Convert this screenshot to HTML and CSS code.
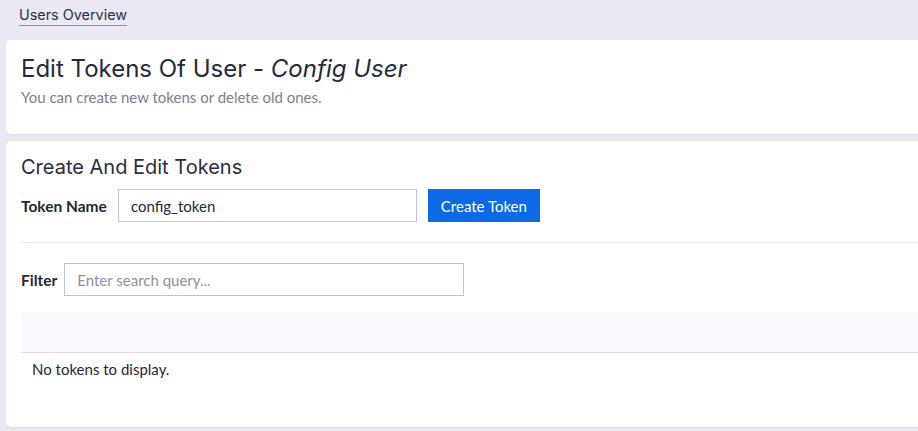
FILE: index.html
```html
<!DOCTYPE html>
<html>
<head>
<meta charset="utf-8">
<link rel="stylesheet" href="styles.css">
</head>
<body>
<div class="page">
  <nav class="crumbs"><a class="crumb" href="#">Users Overview</a></nav>
  <section class="card head-card">
    <h1 class="title">Edit Tokens Of User - <em>Config User</em></h1>
    <p class="subtitle">You can create new tokens or delete old ones.</p>
  </section>
  <section class="card main-card">
    <h2 class="section-title">Create And Edit Tokens</h2>
    <form class="create-row">
      <label class="field-label">Token Name</label>
      <input class="text-input token-input" type="text" value="config_token">
      <button class="btn-primary" type="button">Create Token</button>
    </form>
    <hr class="divider">
    <div class="filter-row">
      <label class="field-label">Filter</label>
      <input class="text-input filter-input" type="text" placeholder="Enter search query...">
    </div>
    <div class="table">
      <div class="table-head"></div>
      <div class="table-empty">No tokens to display.</div>
    </div>
  </section>
</div>
</body>
</html>
```
FILE: styles.css
```css
* { box-sizing: border-box; }
html, body { margin: 0; padding: 0; }
body {
  background: #e9e8f3;
  font-family: "Source Sans Pro", "Lato", "Noto Sans", sans-serif;
  color: #252836;
  overflow: hidden;
  width: 918px;
  height: 431px;
}
.page {
  padding: 0 0 0 6px;
  width: 960px;
}
.crumbs {
  height: 40px;
  padding: 4px 0 0 13px;
}
.crumb {
  display: inline-block;
  font-family: "Inter", "DejaVu Sans", sans-serif;
  font-size: 14.4px;
  color: #2d3047;
  text-decoration: none;
  border-bottom: 1px solid #8a8ca3;
  line-height: 18px;
  padding-bottom: 1px;
}
.card {
  background: #fff;
  border-radius: 5px;
  box-shadow: 0 1px 0 #dedde9, 0 2px 0 #e4e3ee;
}
.head-card {
  height: 94px;
  padding: 14px 15px 0;
  margin-bottom: 7px;
}
.title {
  margin: 0;
  font-family: "Inter", "DejaVu Sans", sans-serif;
  font-weight: 400;
  font-size: 24px;
  line-height: 30px;
  color: #252a3d;
}
.title em { font-style: italic; }
.subtitle {
  margin: 4px 0 0;
  font-size: 15px;
  color: #7f8091;
  line-height: 18px;
}
.main-card {
  height: 286px;
  padding: 13px 0 0 15px;
}
.section-title {
  margin: 0;
  font-family: "Inter", "DejaVu Sans", sans-serif;
  font-weight: 400;
  font-size: 20px;
  line-height: 26px;
  color: #2b2e40;
}
.create-row {
  display: flex;
  align-items: center;
  margin: 9px 0 0;
}
.field-label {
  font-weight: 700;
  font-size: 15.5px;
  color: #252836;
  margin-right: 11px;
}
.text-input {
  height: 33px;
  border: 1px solid #c1c3d8;
  border-radius: 0;
  font-family: inherit;
  font-size: 15px;
  color: #252836;
  padding: 0 12px;
  outline: none;
  background: #fff;
}
.text-input::placeholder { color: #8f90a0; }
.token-input { width: 299px; }
.btn-primary {
  margin-left: 11px;
  height: 33px;
  width: 112px;
  border: 0;
  background: #0c6ae6;
  color: #fff;
  font-family: inherit;
  font-size: 15px;
  padding: 0;
}
.divider {
  border: 0;
  border-top: 1px solid #e9e8f1;
  margin: 20px 0 0;
}
.filter-row {
  display: flex;
  align-items: center;
  margin-top: 20px;
}
.filter-row .field-label { margin-right: 7px; }
.filter-input { width: 400px; }
.table { margin-top: 16px; }
.table-head {
  height: 41px;
  background: #f8f8fd;
  border-bottom: 1px solid #dedce8;
}
.table-empty {
  padding: 7px 11px;
  font-size: 15px;
  line-height: 18px;
  color: #252836;
}
```
